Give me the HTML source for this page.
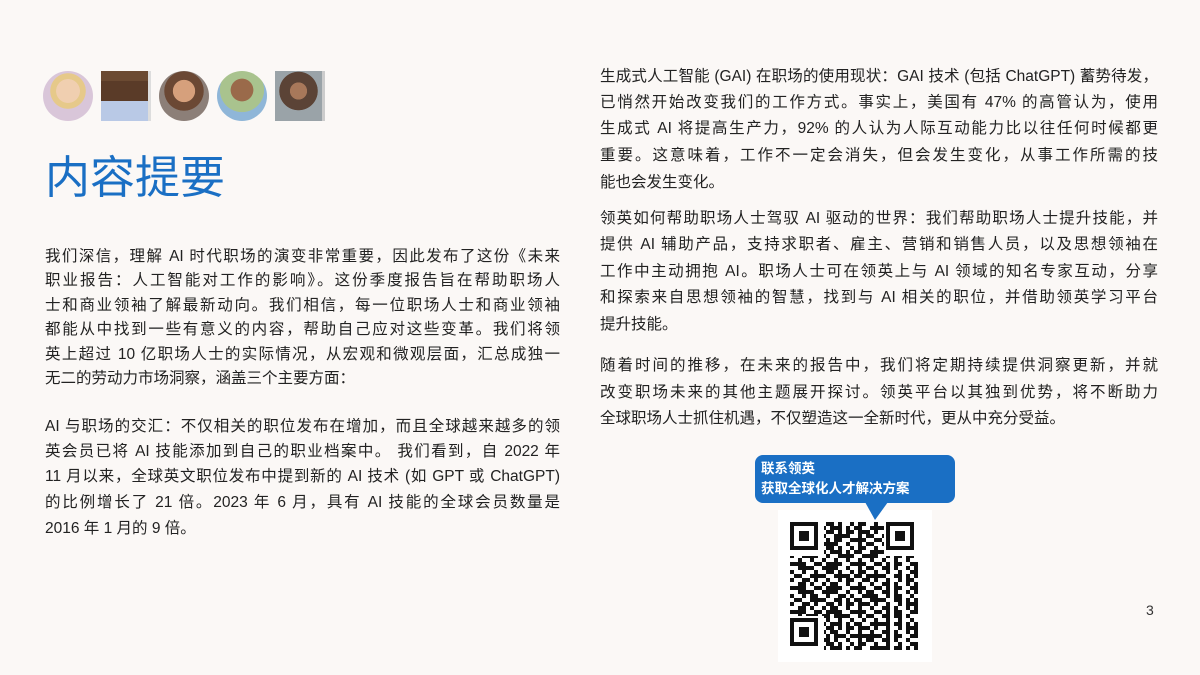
<!DOCTYPE html>
<html><head><meta charset="utf-8"><style>
*{margin:0;padding:0;box-sizing:border-box}
body{width:1200px;height:675px;background:#fbf8f6;position:relative;overflow:hidden;font-family:"Liberation Sans","Noto Sans CJK SC",sans-serif;color:#222}
.l{position:absolute;font-size:15.5px;height:20px;line-height:20px;white-space:nowrap;text-align:justify;text-align-last:justify}
.n{text-align-last:left}
.L{left:45px;width:515px}
.R{left:600px;width:558px}
h1{position:absolute;left:45px;top:146px;font-size:45px;font-weight:400;color:#1a6fc4;font-family:"Noto Sans CJK SC",sans-serif;line-height:56px}
.av{position:absolute;top:71px;width:50px;height:50px}
</style></head><body>
<div class="av" style="left:43px;border-radius:50%;background:radial-gradient(circle at 50% 40%,#f0cfb0 0 30%,#e6c98a 31% 45%,#d9c6d9 46%)"></div>
<div class="av" style="left:101px;background:linear-gradient(#6b4a32 0 20%,#5a3b28 20% 60%,#b9c9e6 60%);border-right:3px solid #ddd"></div>
<div class="av" style="left:159px;border-radius:50%;background:radial-gradient(circle at 50% 40%,#d6a07c 0 28%,#6b4834 29% 50%,#8c7f78 51%)"></div>
<div class="av" style="left:217px;border-radius:50%;background:radial-gradient(circle at 50% 38%,#9a6a4a 0 28%,#a9c38e 29% 55%,#8fb6d8 56%)"></div>
<div class="av" style="left:275px;background:radial-gradient(circle at 50% 40%,#a8785a 0 22%,#5b4336 23% 50%,#9aa3a8 51%);border-right:3px solid #ccc"></div>
<h1>内容提要</h1>

<div class="l L" style="top:247px">我们深信，理解 AI 时代职场的演变非常重要，因此发布了这份《未来</div>
<div class="l L" style="top:271px">职业报告：人工智能对工作的影响》。这份季度报告旨在帮助职场人</div>
<div class="l L" style="top:296px">士和商业领袖了解最新动向。我们相信，每一位职场人士和商业领袖</div>
<div class="l L" style="top:320px">都能从中找到一些有意义的内容，帮助自己应对这些变革。我们将领</div>
<div class="l L" style="top:345px">英上超过 10 亿职场人士的实际情况，从宏观和微观层面，汇总成独一</div>
<div class="l L n" style="top:369px">无二的劳动力市场洞察，涵盖三个主要方面：</div>

<div class="l L" style="top:417px">AI 与职场的交汇：不仅相关的职位发布在增加，而且全球越来越多的领</div>
<div class="l L" style="top:442px">英会员已将 AI 技能添加到自己的职业档案中。 我们看到，自 2022 年</div>
<div class="l L" style="top:467px">11 月以来，全球英文职位发布中提到新的 AI 技术 (如 GPT 或 ChatGPT)</div>
<div class="l L" style="top:493px">的比例增长了 21 倍。2023 年 6 月，具有 AI 技能的全球会员数量是</div>
<div class="l L n" style="top:519px">2016 年 1 月的 9 倍。</div>

<div class="l R" style="top:67px">生成式人工智能 (GAI) 在职场的使用现状：GAI 技术 (包括 ChatGPT) 蓄势待发，</div>
<div class="l R" style="top:93px">已悄然开始改变我们的工作方式。事实上，美国有 47% 的高管认为，使用</div>
<div class="l R" style="top:119px">生成式 AI 将提高生产力，92% 的人认为人际互动能力比以往任何时候都更</div>
<div class="l R" style="top:146px">重要。这意味着，工作不一定会消失，但会发生变化，从事工作所需的技</div>
<div class="l R n" style="top:173px">能也会发生变化。</div>

<div class="l R" style="top:209px">领英如何帮助职场人士驾驭 AI 驱动的世界：我们帮助职场人士提升技能，并</div>
<div class="l R" style="top:235px">提供 AI 辅助产品，支持求职者、雇主、营销和销售人员，以及思想领袖在</div>
<div class="l R" style="top:262px">工作中主动拥抱 AI。职场人士可在领英上与 AI 领域的知名专家互动，分享</div>
<div class="l R" style="top:288px">和探索来自思想领袖的智慧，找到与 AI 相关的职位，并借助领英学习平台</div>
<div class="l R n" style="top:315px">提升技能。</div>

<div class="l R" style="top:356px">随着时间的推移，在未来的报告中，我们将定期持续提供洞察更新，并就</div>
<div class="l R" style="top:383px">改变职场未来的其他主题展开探讨。领英平台以其独到优势，将不断助力</div>
<div class="l R n" style="top:409px">全球职场人士抓住机遇，不仅塑造这一全新时代，更从中充分受益。</div>

<svg style="position:absolute;left:750px;top:452px" width="210" height="220">
<rect x="28" y="58" width="154" height="152" fill="#fff"/>
<rect x="5" y="3" width="200" height="48" rx="8" fill="#1a6fc4"/>
<path d="M115 50 L138 50 L125 68 Z" fill="#1a6fc4"/>
<text x="11" y="21" font-size="13.5" fill="#fff" font-weight="bold" font-family="Noto Sans CJK SC,sans-serif">联系领英</text>
<text x="11" y="41" font-size="13.5" fill="#fff" font-weight="bold" font-family="Noto Sans CJK SC,sans-serif">获取全球化人才解决方案</text>
<defs>
<pattern id="p1" width="12" height="8" patternUnits="userSpaceOnUse"><rect width="4" height="4" fill="#111"/><rect x="8" y="4" width="4" height="4" fill="#111"/></pattern>
<pattern id="p2" width="20" height="12" patternUnits="userSpaceOnUse"><rect x="4" y="4" width="8" height="4" fill="#111"/><rect x="16" y="8" width="4" height="4" fill="#111"/></pattern>
<pattern id="p3" width="28" height="20" patternUnits="userSpaceOnUse"><rect x="12" y="0" width="4" height="12" fill="#111"/><rect x="20" y="12" width="8" height="4" fill="#111"/></pattern>
</defs>
<g transform="translate(40,70)">
<rect width="128" height="128" fill="url(#p1)"/>
<rect width="128" height="128" fill="url(#p2)"/>
<rect width="128" height="128" fill="url(#p3)"/>
<g fill="#fff"><rect width="34" height="34"/><rect x="94" width="34" height="34"/><rect y="94" width="34" height="34"/></g>
<g fill="none" stroke="#111" stroke-width="4"><rect x="2" y="2" width="24" height="24"/><rect x="98" y="2" width="24" height="24"/><rect x="2" y="98" width="24" height="24"/></g>
<g fill="#111"><rect x="9" y="9" width="10" height="10"/><rect x="105" y="9" width="10" height="10"/><rect x="9" y="105" width="10" height="10"/></g>
</g>
</svg>
<div style="position:absolute;left:1146px;top:602px;font-size:14px;color:#333">3</div>
</body></html>
